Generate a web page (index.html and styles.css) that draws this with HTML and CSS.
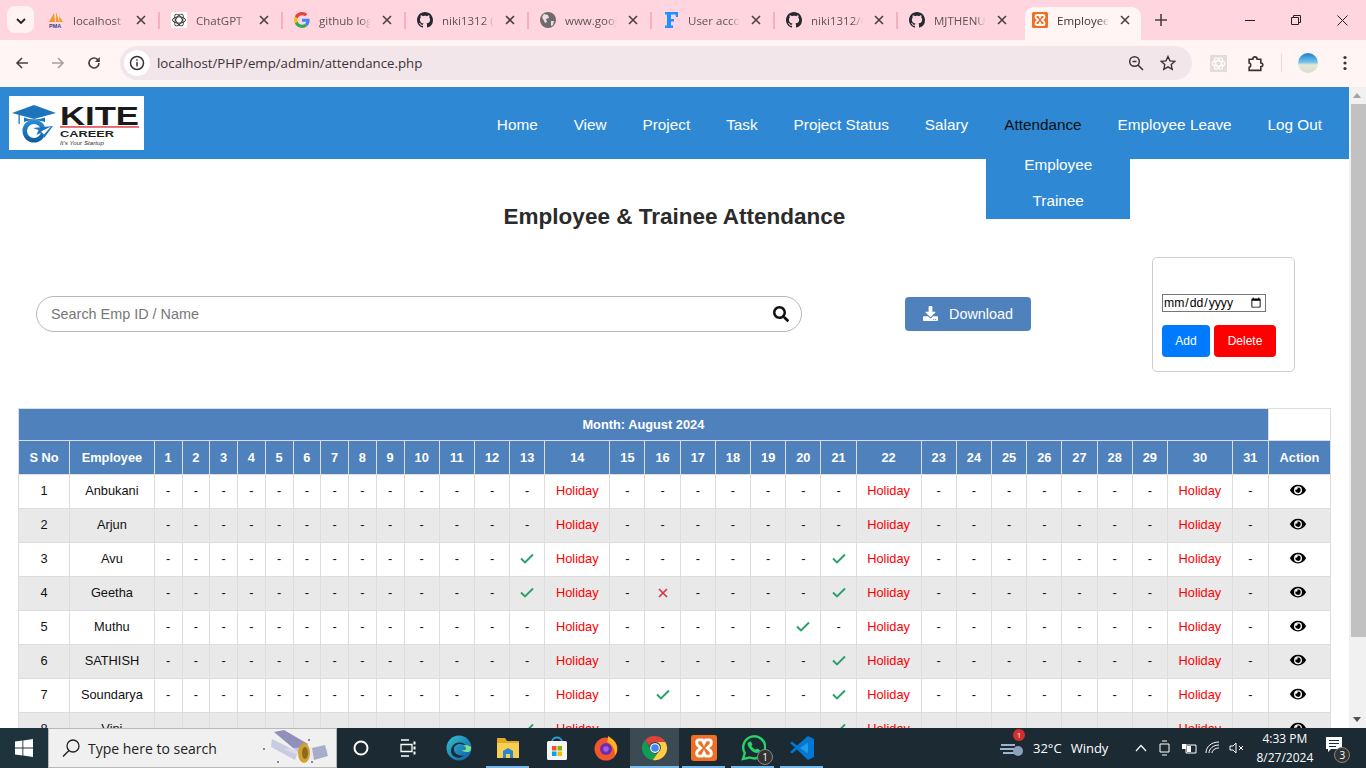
FILE: index.html
```html
<!DOCTYPE html>
<html lang="en">
<head>
    <meta charset="UTF-8">
    <meta name="viewport" content="width=device-width, initial-scale=1.0">
    <title>Employee Attendance</title>
    <link rel="stylesheet" href="styles.css">
</head>
<body>
    <svg class="sprites" aria-hidden="true">
        <symbol id="i-github" viewBox="0 0 16 16"><path fill="#24292f" d="M8 0C3.58 0 0 3.58 0 8c0 3.54 2.29 6.53 5.47 7.59.4.07.55-.17.55-.38 0-.19-.01-.82-.01-1.49-2.01.37-2.53-.49-2.69-.94-.09-.23-.48-.94-.82-1.13-.28-.15-.68-.52-.01-.53.63-.01 1.08.58 1.23.82.72 1.21 1.87.87 2.33.66.07-.52.28-.87.51-1.07-1.78-.2-3.64-.89-3.64-3.95 0-.87.31-1.59.82-2.15-.08-.2-.36-1.02.08-2.12 0 0 .67-.21 2.2.82.64-.18 1.32-.27 2-.27.68 0 1.36.09 2 .27 1.53-1.04 2.2-.82 2.2-.82.44 1.1.16 1.92.08 2.12.51.56.82 1.27.82 2.15 0 3.07-1.87 3.75-3.65 3.95.29.25.54.73.54 1.48 0 1.07-.01 1.93-.01 2.2 0 .21.15.46.55.38A8.013 8.013 0 0016 8c0-4.42-3.58-8-8-8z"/></symbol>
        <symbol id="i-xampp" viewBox="0 0 16 16"><rect width="16" height="16" rx="1.5" fill="#ee6f25"/><path fill="none" stroke="#fff" stroke-width="1.8" d="M5 3h2l1 2 1-2h2c2 0 2 3 0 4l-1 1 1 1c2 1 2 4 0 4H9l-1-2-1 2H5c-2 0-2-3 0-4l1-1-1-1c-2-1-2-4 0-4z"/></symbol>
        <symbol id="i-close" viewBox="0 0 10 10"><path fill="none" stroke="#4b3f44" stroke-width="1.6" d="M1 1l8 8M9 1l-8 8"/></symbol>
        <symbol id="i-check" viewBox="0 0 14 11"><path fill="none" stroke="#28a06a" stroke-width="1.9" d="M1 5.500l4 4L13 1.500"/></symbol>
        <symbol id="i-cross" viewBox="0 0 10 10"><path fill="none" stroke="#dc3545" stroke-width="1.7" d="M1 1l8 8M9 1l-8 8"/></symbol>
        <symbol id="i-eye" viewBox="0 0 576 512"><path fill="#000" d="M572.52 241.4C518.29 135.59 410.93 64 288 64S57.68 135.64 3.48 241.41a32.35 32.35 0 0 0 0 29.19C57.71 376.41 165.07 448 288 448s230.32-71.64 284.52-177.41a32.35 32.35 0 0 0 0-29.19zM288 400a144 144 0 1 1 144-144 143.93 143.93 0 0 1-144 144zm0-240a95.31 95.31 0 0 0-25.31 3.79 47.85 47.85 0 0 1-66.9 66.9A95.78 95.78 0 1 0 288 160z"/></symbol>
    </svg>

    <div class="screen">
        <div class="tabstrip">
            <button class="tab-menu"><svg width="10" height="6" viewBox="0 0 10 6"><path fill="none" stroke="#222" stroke-width="1.8" d="M1 1l4 4 4-4"/></svg></button>
            <div class="tab">
                <svg class="favicon" viewBox="0 0 16 16"><path fill="#f29a1f" d="M1 10L6 1l1 9zM8 10V0l3 10zM11.500 10L11 4l4 6z"/><text class="pma" x="1" y="15.500">PMA</text></svg>
                <span class="tab-title">localhost /</span>
                <svg class="tab-close"><use href="#i-close"/></svg>
            </div>
            <div class="tab">
                <svg class="favicon" viewBox="0 0 16 16"><rect width="16" height="16" fill="#fff"/><g fill="none" stroke="#333" stroke-width="1"><ellipse cx="8" cy="8" rx="6.500" ry="3.200"/><ellipse cx="8" cy="8" rx="6.500" ry="3.200" transform="rotate(60 8 8)"/><ellipse cx="8" cy="8" rx="6.500" ry="3.200" transform="rotate(120 8 8)"/></g></svg>
                <span class="tab-title">ChatGPT</span>
                <svg class="tab-close"><use href="#i-close"/></svg>
            </div>
            <div class="tab">
                <svg class="favicon" viewBox="0 0 48 48"><path fill="#EA4335" d="M24 9.500c3.540 0 6.710 1.220 9.210 3.600l6.850-6.850C35.900 2.380 30.470 0 24 0 14.620 0 6.510 5.380 2.560 13.220l7.980 6.190C12.430 13.720 17.740 9.500 24 9.500z"/><path fill="#4285F4" d="M46.980 24.550c0-1.570-.15-3.090-.38-4.550H24v9.020h12.940c-.58 2.960-2.260 5.480-4.780 7.180l7.730 6c4.510-4.180 7.090-10.360 7.090-17.650z"/><path fill="#FBBC05" d="M10.530 28.590c-.48-1.450-.76-2.990-.76-4.590s.27-3.140.76-4.590l-7.980-6.190C.92 16.460 0 20.120 0 24c0 3.880.92 7.540 2.560 10.780l7.970-6.190z"/><path fill="#34A853" d="M24 48c6.480 0 11.930-2.130 15.890-5.810l-7.730-6c-2.150 1.450-4.920 2.300-8.160 2.300-6.260 0-11.570-4.220-13.470-9.910l-7.980 6.190C6.510 42.620 14.620 48 24 48z"/></svg>
                <span class="tab-title">github login</span>
                <svg class="tab-close"><use href="#i-close"/></svg>
            </div>
            <div class="tab">
                <svg class="favicon"><use href="#i-github"/></svg>
                <span class="tab-title">niki1312 (</span>
                <svg class="tab-close"><use href="#i-close"/></svg>
            </div>
            <div class="tab">
                <svg class="favicon" viewBox="0 0 16 16"><circle cx="8" cy="8" r="8" fill="#6f6a6c"/><path fill="#e9dfe2" d="M4 2l4 1 1 3-3 1 1 3-2 1-2-4-1-2zM11 9l3 0-1 4-2 1z"/></svg>
                <span class="tab-title">www.google</span>
                <svg class="tab-close"><use href="#i-close"/></svg>
            </div>
            <div class="tab">
                <svg class="favicon" viewBox="0 0 16 16"><path fill="#1e90ff" d="M2 0h13v5h-2l-.5-2.500H8V7h3v2.500H8V13.500h2V16H2v-2.500h2v-11H2z"/></svg>
                <span class="tab-title">User account</span>
                <svg class="tab-close"><use href="#i-close"/></svg>
            </div>
            <div class="tab">
                <svg class="favicon"><use href="#i-github"/></svg>
                <span class="tab-title">niki1312/C</span>
                <svg class="tab-close"><use href="#i-close"/></svg>
            </div>
            <div class="tab tab-nosep">
                <svg class="favicon"><use href="#i-github"/></svg>
                <span class="tab-title">MJTHENU</span>
                <svg class="tab-close"><use href="#i-close"/></svg>
            </div>
            <div class="tab tab-active tab-nosep">
                <svg class="favicon"><use href="#i-xampp"/></svg>
                <span class="tab-title">Employee</span>
                <svg class="tab-close"><use href="#i-close"/></svg>
            </div>
            <svg class="tab-new" width="12" height="12" viewBox="0 0 12 12"><path fill="none" stroke="#4b3f44" stroke-width="1.600" d="M6 0v12M0 6h12"/></svg>
            <div class="window-controls">
                <svg width="10" height="10" viewBox="0 0 10 10"><path stroke="#222" d="M0 5.500h10"/></svg>
                <svg width="10" height="10" viewBox="0 0 10 10"><path fill="none" stroke="#222" d="M.5 2.500h7v7h-7zM2.500 2.500v-2h7v7h-2"/></svg>
                <svg width="11" height="11" viewBox="0 0 11 11"><path fill="none" stroke="#222" d="M.5.500l10 10M10.500.500l-10 10"/></svg>
            </div>
        </div>

        <div class="toolbar">
            <svg class="nav-icon" viewBox="0 0 14 14"><path fill="none" stroke="#4b3f44" stroke-width="1.600" d="M13 7H2M7 2L2 7l5 5"/></svg>
            <svg class="nav-icon" viewBox="0 0 14 14"><path fill="none" stroke="#a89ea2" stroke-width="1.600" d="M1 7h11M7 2l5 5-5 5"/></svg>
            <svg class="nav-icon" viewBox="0 0 14 14"><path fill="none" stroke="#4b3f44" stroke-width="1.600" d="M12 7a5 5 0 11-1.500-3.600L12 5"/><path fill="#4b3f44" d="M12.800 1v5h-5z"/></svg>
            <div class="omnibox">
                <span class="site-info"><svg width="16" height="16" viewBox="0 0 16 16"><circle cx="8" cy="8" r="6.500" fill="none" stroke="#3c3236" stroke-width="1.500"/><path stroke="#3c3236" stroke-width="1.500" d="M8 7v4.500M8 4.200v1.500"/></svg></span>
                <span class="url">localhost/PHP/emp/admin/attendance.php</span>
                <svg class="omni-icon" viewBox="0 0 16 16"><circle cx="6.500" cy="6.500" r="4.800" fill="none" stroke="#3c3236" stroke-width="1.500"/><path stroke="#3c3236" stroke-width="1.600" d="M10 10l5 5M4.500 6.500h4"/></svg>
                <svg class="omni-icon" viewBox="0 0 16 16"><path fill="none" stroke="#3c3236" stroke-width="1.400" d="M8 1.500l2 4.400 4.700.5-3.500 3.200 1 4.700L8 11.900l-4.200 2.400 1-4.700L1.300 6.400 6 5.900z"/></svg>
            </div>
            <div class="toolbar-right">
                <svg class="ext-icon" viewBox="0 0 16 16"><rect width="16" height="16" fill="#e4dcdc"/><g fill="none" stroke="#fff" stroke-width="1"><ellipse cx="8" cy="8" rx="6" ry="2.500"/><ellipse cx="8" cy="8" rx="6" ry="2.500" transform="rotate(60 8 8)"/><ellipse cx="8" cy="8" rx="6" ry="2.500" transform="rotate(120 8 8)"/></g></svg>
                <svg class="ext-icon" viewBox="0 0 16 16"><path fill="none" stroke="#3c3236" stroke-width="1.500" d="M2 4h3.500c0-3 4-3 4 0H13v3.500c2.500 0 2.500 3.500 0 3.500v3.500H2v-3c2 0 2-4 0-4z"/></svg>
                <span class="toolbar-sep"></span>
                <span class="avatar"></span>
                <svg class="more-icon" width="4" height="16" viewBox="0 0 4 16"><circle cx="2" cy="2.500" r="1.600" fill="#3c3236"/><circle cx="2" cy="8" r="1.600" fill="#3c3236"/><circle cx="2" cy="13.500" r="1.600" fill="#3c3236"/></svg>
            </div>
        </div>

        <div class="viewport">
            <div class="page">
                <header class="site-header">
                    <svg class="logo" viewBox="0 0 135 54">
                        <defs>
                            <linearGradient id="logo-blue" x1="0" y1="0" x2="0" y2="1"><stop offset="0" stop-color="#2a8fd8"/><stop offset="1" stop-color="#0f5aa6"/></linearGradient>
                        </defs>
                        <rect width="135" height="54" fill="#fff"/>
                        <path fill="#1c75bc" d="M3 17L25 9l22 8-22 6z"/>
                        <path fill="#1c75bc" d="M15 21.500c6 2.500 14 2.500 21 0V26c-7-2.500-15-2.500-21 0z"/>
                        <path fill="#1c75bc" d="M9.500 18.500h1.300V28H9.500z"/>
                        <circle cx="25" cy="35" r="11.500" fill="url(#logo-blue)"/>
                        <circle cx="25" cy="35" r="7" fill="#fff"/>
                        <path fill="#1c75bc" d="M24 32l20-2-9 12-2.500-5.500-5 2.500 2-5z"/>
                        <path fill="#fff" d="M32 35.500l10-5-7 8z"/>
                        <text class="logo-kite" x="51" y="28.500" textLength="79" lengthAdjust="spacingAndGlyphs">KITE</text>
                        <rect x="51" y="30.300" width="79" height="1.300" fill="#e0202a"/>
                        <text class="logo-career" x="51" y="41" textLength="54" lengthAdjust="spacingAndGlyphs">CAREER</text>
                        <text class="logo-tag" x="51" y="49" textLength="44" lengthAdjust="spacingAndGlyphs">It's Your Startup</text>
                    </svg>
                    <nav class="main-nav">
                        <a href="#">Home</a>
                        <a href="#">View</a>
                        <a href="#">Project</a>
                        <a href="#">Task</a>
                        <a href="#">Project Status</a>
                        <a href="#">Salary</a>
                        <div class="nav-drop">
                            <a href="#" class="nav-current">Attendance</a>
                            <div class="drop-menu">
                                <a href="#">Employee</a>
                                <a href="#">Trainee</a>
                            </div>
                        </div>
                        <a href="#">Employee Leave</a>
                        <a href="#">Log Out</a>
                    </nav>
                </header>

                <h2 class="page-title">Employee &amp; Trainee Attendance</h2>

                <div class="tools">
                    <div class="search">
                        <input type="text" class="search-input" placeholder="Search Emp ID / Name">
                        <svg class="search-icon" viewBox="0 0 512 512"><path fill="#111" d="M505 442.700L405.300 343c-4.500-4.500-10.600-7-17-7H372c27.600-35.300 44-79.700 44-128C416 93.100 322.900 0 208 0S0 93.100 0 208s93.100 208 208 208c48.300 0 92.700-16.400 128-44v16.300c0 6.400 2.500 12.500 7 17l99.700 99.700c9.400 9.400 24.600 9.400 33.900 0l28.300-28.300c9.400-9.400 9.400-24.600.1-34zM208 336c-70.700 0-128-57.200-128-128 0-70.700 57.200-128 128-128 70.700 0 128 57.200 128 128 0 70.700-57.200 128-128 128z"/></svg>
                    </div>
                    <button class="download-btn">
                        <svg width="15" height="15" viewBox="0 0 512 512"><path fill="#fff" d="M216 0h80c13.300 0 24 10.700 24 24v168h87.700c17.800 0 26.700 21.500 14.100 34.100L269.700 378.300c-7.500 7.500-19.800 7.500-27.300 0L90.100 226.100c-12.600-12.600-3.700-34.100 14.100-34.100H192V24c0-13.300 10.700-24 24-24zm296 376v112c0 13.300-10.700 24-24 24H24c-13.300 0-24-10.700-24-24V376c0-13.300 10.700-24 24-24h146.700l49 49c20.100 20.100 52.500 20.100 72.600 0l49-49H488c13.300 0 24 10.700 24 24zm-124 88c0-11-9-20-20-20s-20 9-20 20 9 20 20 20 20-9 20-20zm64 0c0-11-9-20-20-20s-20 9-20 20 9 20 20 20 20-9 20-20z"/></svg>
                        Download
                    </button>
                    <div class="date-box">
                        <input type="date" class="date-input">
                        <div class="date-actions">
                            <button class="btn-add">Add</button>
                            <button class="btn-delete">Delete</button>
                        </div>
                    </div>
                </div>

                <table class="attendance">
                    <colgroup>
                        <col class="col-sno"><col class="col-name">
                        <col class="col-s"><col class="col-s"><col class="col-s"><col class="col-s"><col class="col-s"><col class="col-s"><col class="col-s"><col class="col-s"><col class="col-s">
                        <col class="col-d"><col class="col-d"><col class="col-d"><col class="col-d"><col class="col-h">
                        <col class="col-d"><col class="col-d"><col class="col-d"><col class="col-d"><col class="col-d"><col class="col-d"><col class="col-d"><col class="col-h">
                        <col class="col-d"><col class="col-d"><col class="col-d"><col class="col-d"><col class="col-d"><col class="col-d"><col class="col-d"><col class="col-h">
                        <col class="col-last"><col class="col-action">
                    </colgroup>
                    <thead>
                        <tr class="month-row">
                            <th colspan="33">Month: August 2024</th>
                            <th class="blank"></th>
                        </tr>
                        <tr>
                            <th>S No</th><th>Employee</th><th>1</th><th>2</th><th>3</th><th>4</th><th>5</th><th>6</th><th>7</th><th>8</th><th>9</th><th>10</th><th>11</th><th>12</th><th>13</th><th>14</th><th>15</th><th>16</th><th>17</th><th>18</th><th>19</th><th>20</th><th>21</th><th>22</th><th>23</th><th>24</th><th>25</th><th>26</th><th>27</th><th>28</th><th>29</th><th>30</th><th>31</th><th>Action</th>
                        </tr>
                    </thead>
                    <tbody>
                        <tr><td>1</td><td>Anbukani</td><td>-</td><td>-</td><td>-</td><td>-</td><td>-</td><td>-</td><td>-</td><td>-</td><td>-</td><td>-</td><td>-</td><td>-</td><td>-</td><td class="holiday">Holiday</td><td>-</td><td>-</td><td>-</td><td>-</td><td>-</td><td>-</td><td>-</td><td class="holiday">Holiday</td><td>-</td><td>-</td><td>-</td><td>-</td><td>-</td><td>-</td><td>-</td><td class="holiday">Holiday</td><td>-</td><td><svg class="eye"><use href="#i-eye"/></svg></td></tr>
                        <tr><td>2</td><td>Arjun</td><td>-</td><td>-</td><td>-</td><td>-</td><td>-</td><td>-</td><td>-</td><td>-</td><td>-</td><td>-</td><td>-</td><td>-</td><td>-</td><td class="holiday">Holiday</td><td>-</td><td>-</td><td>-</td><td>-</td><td>-</td><td>-</td><td>-</td><td class="holiday">Holiday</td><td>-</td><td>-</td><td>-</td><td>-</td><td>-</td><td>-</td><td>-</td><td class="holiday">Holiday</td><td>-</td><td><svg class="eye"><use href="#i-eye"/></svg></td></tr>
                        <tr><td>3</td><td>Avu</td><td>-</td><td>-</td><td>-</td><td>-</td><td>-</td><td>-</td><td>-</td><td>-</td><td>-</td><td>-</td><td>-</td><td>-</td><td><svg class="mark"><use href="#i-check"/></svg></td><td class="holiday">Holiday</td><td>-</td><td>-</td><td>-</td><td>-</td><td>-</td><td>-</td><td><svg class="mark"><use href="#i-check"/></svg></td><td class="holiday">Holiday</td><td>-</td><td>-</td><td>-</td><td>-</td><td>-</td><td>-</td><td>-</td><td class="holiday">Holiday</td><td>-</td><td><svg class="eye"><use href="#i-eye"/></svg></td></tr>
                        <tr><td>4</td><td>Geetha</td><td>-</td><td>-</td><td>-</td><td>-</td><td>-</td><td>-</td><td>-</td><td>-</td><td>-</td><td>-</td><td>-</td><td>-</td><td><svg class="mark"><use href="#i-check"/></svg></td><td class="holiday">Holiday</td><td>-</td><td><svg class="mark mark-x"><use href="#i-cross"/></svg></td><td>-</td><td>-</td><td>-</td><td>-</td><td><svg class="mark"><use href="#i-check"/></svg></td><td class="holiday">Holiday</td><td>-</td><td>-</td><td>-</td><td>-</td><td>-</td><td>-</td><td>-</td><td class="holiday">Holiday</td><td>-</td><td><svg class="eye"><use href="#i-eye"/></svg></td></tr>
                        <tr><td>5</td><td>Muthu</td><td>-</td><td>-</td><td>-</td><td>-</td><td>-</td><td>-</td><td>-</td><td>-</td><td>-</td><td>-</td><td>-</td><td>-</td><td>-</td><td class="holiday">Holiday</td><td>-</td><td>-</td><td>-</td><td>-</td><td>-</td><td><svg class="mark"><use href="#i-check"/></svg></td><td>-</td><td class="holiday">Holiday</td><td>-</td><td>-</td><td>-</td><td>-</td><td>-</td><td>-</td><td>-</td><td class="holiday">Holiday</td><td>-</td><td><svg class="eye"><use href="#i-eye"/></svg></td></tr>
                        <tr><td>6</td><td>SATHISH</td><td>-</td><td>-</td><td>-</td><td>-</td><td>-</td><td>-</td><td>-</td><td>-</td><td>-</td><td>-</td><td>-</td><td>-</td><td>-</td><td class="holiday">Holiday</td><td>-</td><td>-</td><td>-</td><td>-</td><td>-</td><td>-</td><td><svg class="mark"><use href="#i-check"/></svg></td><td class="holiday">Holiday</td><td>-</td><td>-</td><td>-</td><td>-</td><td>-</td><td>-</td><td>-</td><td class="holiday">Holiday</td><td>-</td><td><svg class="eye"><use href="#i-eye"/></svg></td></tr>
                        <tr><td>7</td><td>Soundarya</td><td>-</td><td>-</td><td>-</td><td>-</td><td>-</td><td>-</td><td>-</td><td>-</td><td>-</td><td>-</td><td>-</td><td>-</td><td>-</td><td class="holiday">Holiday</td><td>-</td><td><svg class="mark"><use href="#i-check"/></svg></td><td>-</td><td>-</td><td>-</td><td>-</td><td><svg class="mark"><use href="#i-check"/></svg></td><td class="holiday">Holiday</td><td>-</td><td>-</td><td>-</td><td>-</td><td>-</td><td>-</td><td>-</td><td class="holiday">Holiday</td><td>-</td><td><svg class="eye"><use href="#i-eye"/></svg></td></tr>
                        <tr><td>8</td><td>Vini</td><td>-</td><td>-</td><td>-</td><td>-</td><td>-</td><td>-</td><td>-</td><td>-</td><td>-</td><td>-</td><td>-</td><td>-</td><td><svg class="mark"><use href="#i-check"/></svg></td><td class="holiday">Holiday</td><td>-</td><td>-</td><td>-</td><td>-</td><td>-</td><td>-</td><td><svg class="mark"><use href="#i-check"/></svg></td><td class="holiday">Holiday</td><td>-</td><td>-</td><td>-</td><td>-</td><td>-</td><td>-</td><td>-</td><td class="holiday">Holiday</td><td>-</td><td><svg class="eye"><use href="#i-eye"/></svg></td></tr>
                    </tbody>
                </table>
            </div>
            <div class="scrollbar">
                <span class="arrow-up"></span>
                <span class="thumb"></span>
                <span class="arrow-down"></span>
            </div>
        </div>

        <div class="taskbar">
            <div class="start"><svg width="18" height="18" viewBox="0 0 18 18"><path fill="#fff" d="M0 2.500l7.400-1v7H0zM8.300 1.400L18 0v8.500H8.300zM0 9.400h7.400v7.100l-7.400-1zM8.300 9.400H18V18l-9.700-1.400z"/></svg></div>
            <div class="task-search">
                <svg width="20" height="20" viewBox="0 0 20 20"><circle cx="12" cy="8" r="6" fill="none" stroke="#222" stroke-width="1.300"/><path stroke="#222" stroke-width="1.500" d="M8 12.500L2 18.500"/></svg>
                <span class="task-search-text">Type here to search</span>
                <svg class="doodle" width="68" height="38" viewBox="0 0 68 38">
                    <circle cx="1" cy="20" r="1" fill="#5a6a80"/><circle cx="46" cy="11" r="1" fill="#5a6a80"/><circle cx="15" cy="33" r="1" fill="#5a6a80"/><circle cx="49" cy="33" r="1" fill="#5a6a80"/>
                    <path fill="#8f90bb" d="M11 3l10-2 24 14-9 9z"/>
                    <path fill="#c9cbe0" d="M9 10l26 13-3 8L8 18z"/>
                    <path fill="#e4e6f2" d="M20 20l22-2 24 2-4 8-14 3z" opacity=".6"/>
                    <path fill="#a9acc8" d="M49 19l13-3 3 11-14 4z"/>
                    <ellipse cx="41" cy="24" rx="6" ry="10" fill="#d1a02f"/>
                    <ellipse cx="42" cy="24" rx="3" ry="6" fill="#8a6a1f"/>
                </svg>
            </div>
            <div class="task-item"><svg width="20" height="20" viewBox="0 0 20 20"><circle cx="10" cy="10" r="6.500" fill="none" stroke="#fff" stroke-width="2"/></svg></div>
            <div class="task-item"><svg width="18" height="18" viewBox="0 0 18 18"><path fill="none" stroke="#fff" stroke-width="1.300" d="M2 1h8M2 17h8M2 5.500h11v7H2z"/><path stroke="#fff" stroke-width="2" d="M15.500 2.500v3M15.500 7.500v3M15.500 12.500v3"/></svg></div>
            <div class="task-apps">
                <div class="task-item"><svg width="26" height="26" viewBox="0 0 26 26"><defs><linearGradient id="edge" x1="0" y1="0" x2="1" y2="1"><stop offset="0" stop-color="#35c1d1"/><stop offset="1" stop-color="#0c59a4"/></linearGradient></defs><circle cx="13" cy="13" r="12.500" fill="url(#edge)"/><path fill="#1c2a33" d="M14 9c-4 0-6.500 2.500-6 6 .5 4 5 6.500 10 5.500-3 3-9 3-12-1C3.500 15.500 6 8 12.500 7.500c4-.3 7 1.500 8 4-1.500-1.500-4-2.500-6.500-2.500z"/><path fill="#7fe08f" d="M25 12c.3 3-1 5-3 5s-5 0-6.500-2c1.500.5 4 .5 4.500-1 .4-1.500-1-3-3-3.500 3-.5 7 0 8 1.500z"/></svg></div>
                <div class="task-item task-running"><svg width="26" height="24" viewBox="0 0 26 24"><path fill="#e3a72a" d="M2 2h8l2 3h12v17H2z"/><path fill="#f7cf52" d="M2 7h22v15H2z"/><path fill="#2a86d1" d="M8 22v-7l5-3 5 3v7h-3v-4h-4v4z"/></svg></div>
                <div class="task-item"><svg width="26" height="26" viewBox="0 0 26 26"><path fill="none" stroke="#2a9fd6" stroke-width="1.800" d="M8 7c0-6 10-6 10 0"/><rect x="3" y="6" width="20" height="19" rx="1.500" fill="#f5f5f5"/><rect x="8" y="11" width="4.500" height="4.500" fill="#f25022"/><rect x="13.500" y="11" width="4.500" height="4.500" fill="#7fba00"/><rect x="8" y="16.500" width="4.500" height="4.500" fill="#00a4ef"/><rect x="13.500" y="16.500" width="4.500" height="4.500" fill="#ffb900"/></svg></div>
                <div class="task-item"><svg width="26" height="26" viewBox="0 0 26 26"><circle cx="13" cy="14" r="11.500" fill="#f2562c"/><path fill="#ffb31a" d="M15 1c5 3 9 7 9 13 0 3-1 5-2 6 0-6-3-11-8-13 1-2 1-4 1-6z"/><circle cx="13" cy="14" r="6" fill="#6a2fb0"/><circle cx="13" cy="14" r="2.800" fill="#a65be0"/></svg></div>
                <div class="task-item task-active"><svg width="26" height="26" viewBox="0 0 48 48"><path fill="#db4437" d="M24 2a22 22 0 0119 11H24a11 11 0 00-10.500 7.500L6 9A22 22 0 0124 2z"/><path fill="#0f9d58" d="M6 9l10 18a11 11 0 0012 7.500L20 46A22 22 0 016 9z" /><path fill="#ffcd40" d="M43 13a22 22 0 01-23 33l9-13a11 11 0 004-16 10 10 0 00-9-4z"/><circle cx="24" cy="24" r="9" fill="#fff"/><circle cx="24" cy="24" r="7" fill="#4285f4"/></svg></div>
                <div class="task-item task-running"><svg width="26" height="26"><use href="#i-xampp"/></svg></div>
                <div class="task-item task-running task-badged"><svg width="26" height="28" viewBox="0 0 26 28"><path fill="none" stroke="#25d366" stroke-width="2.400" d="M3 25l1.800-6A11 11 0 1110 23.500z"/><path fill="#25d366" d="M9 8l2-.5 1.500 3-1 1.500c1 2 2.500 3 4 3.500l1.500-1 3 1.500c0 2-1.500 3-3 3-4 0-9-5-9.500-9 0-1 .5-2 1.500-2z"/></svg><span class="badge">1</span></div>
                <div class="task-item task-running"><svg width="26" height="26" viewBox="0 0 26 26"><path fill="#0078d4" d="M19 1l6 3v18l-6 3-11-10.500-5 4-2-1.500 5-4.500-5-4.500 2-1.500 5 4z"/><path fill="#1c9cea" d="M19 7.500v11L11 13z"/></svg></div>
            </div>
            <div class="tray">
                <span class="weather">
                    <svg width="26" height="24" viewBox="0 0 26 24"><path stroke="#9db4cf" stroke-width="2" d="M1 9h14M0 13h20M3 17h15"/><circle cx="18" cy="15" r="5" fill="#8aa0bc"/></svg>
                    <span class="weather-dot">1</span>
                </span>
                <span class="weather-temp">32°C</span>
                <span class="weather-text">Windy</span>
                <div class="tray-icons">
                    <svg width="12" height="8" viewBox="0 0 12 8"><path fill="none" stroke="#fff" stroke-width="1.200" d="M1 7l5-5.500L11 7"/></svg>
                    <svg width="12" height="18" viewBox="0 0 12 18"><path fill="none" stroke="#fff" d="M1 5h9v8H1zM3 2h5M3 16h5"/></svg>
                    <svg width="16" height="12" viewBox="0 0 16 12"><path fill="none" stroke="#fff" d="M5 3h10v8H5z"/><path fill="#fff" d="M1 2h4v5H1zM6 4h4v6H6z"/></svg>
                    <svg width="16" height="14" viewBox="0 0 16 14"><path fill="none" stroke="#fff" d="M1 12C1 6 6 1 14 1M4 12c0-4 4-8 10-8M7 12c0-2.500 3-5 7-5"/></svg>
                    <svg width="16" height="14" viewBox="0 0 16 14"><path fill="none" stroke="#fff" d="M1 5h3l3-3v10l-3-3H1zM10 5l4 4M14 5l-4 4"/></svg>
                </div>
                <div class="clock"><span>4:33 PM</span><span>8/27/2024</span></div>
                <span class="notify">
                    <svg width="18" height="15" viewBox="0 0 18 15"><path fill="#fff" d="M1 0h16v12H6l-3 3v-3H1z"/><path stroke="#1c2a33" d="M4 3.500h10M4 6.500h10M4 9.500h7"/></svg>
                    <span class="badge">3</span>
                </span>
            </div>
        </div>
    </div>
</body>
</html>
```

FILE: styles.css
```css
* {
    box-sizing: border-box;
}

html, body {
    margin: 0;
    height: 100%;
    overflow: hidden;
}

body {
    font-family: "Liberation Sans", Arial, sans-serif;
    background: #fff;
}

.sprites {
    display: none;
}

.screen {
    display: flex;
    flex-direction: column;
    height: 100vh;
}

/* browser tabs */
.tabstrip {
    display: flex;
    height: 40px;
    flex: none;
    background: #ffd6df;
    font-family: "Open Sans", sans-serif;
}

.tab-menu {
    width: 27px;
    height: 27px;
    margin: 6px 2px 0 7px;
    padding: 0;
    border: 0;
    border-radius: 8px;
    background: #fff2f2;
}

.tab {
    position: relative;
    display: flex;
    align-items: center;
    flex: none;
    width: 123px;
    height: 40px;
    padding-left: 12px;
}

.tab::after {
    content: "";
    position: absolute;
    right: -1px;
    top: 12px;
    width: 2px;
    height: 17px;
    background: #f9aebf;
}

.tab-nosep::after {
    display: none;
}

.tab-active::before {
    content: "";
    position: absolute;
    left: 5px;
    right: 2px;
    top: 7px;
    bottom: 0;
    border-radius: 9px 9px 0 0;
    background: #fff5f4;
}

.favicon {
    position: relative;
    flex: none;
    width: 16px;
    height: 16px;
}

.pma {
    font: bold 5.5px "Liberation Sans", sans-serif;
    fill: #28448a;
}

.tab-title {
    position: relative;
    width: 52px;
    margin-left: 9px;
    overflow: hidden;
    white-space: nowrap;
    font-size: 11.5px;
    color: #5c5357;
    -webkit-mask-image: linear-gradient(90deg, #000 80%, transparent);
    mask-image: linear-gradient(90deg, #000 80%, transparent);
}

.tab-active .tab-title {
    color: #3c3236;
}

.tab-close {
    position: relative;
    width: 10px;
    height: 10px;
    margin-left: 11px;
}

.tab-new {
    align-self: center;
    margin-left: 12px;
}

.window-controls {
    display: flex;
    align-items: center;
    margin-left: auto;
    gap: 36px;
    padding-right: 18px;
}

/* address bar */
.toolbar {
    display: flex;
    align-items: center;
    flex: none;
    height: 47px;
    padding: 0 0 1px 15px;
    gap: 22px;
    background: #fff5f4;
}

.nav-icon {
    width: 14px;
    height: 14px;
}

.omnibox {
    display: flex;
    align-items: center;
    width: 1072px;
    height: 34px;
    margin-left: -3px;
    padding-left: 4px;
    border-radius: 17px;
    background: #f2e6ea;
}

.site-info {
    display: flex;
    align-items: center;
    justify-content: center;
    width: 26px;
    height: 26px;
    border-radius: 50%;
    background: #fff;
}

.url {
    flex: 1;
    margin-left: 7px;
    font-family: "Open Sans", sans-serif;
    font-size: 13.25px;
    color: #3c3236;
}

.omni-icon {
    width: 16px;
    height: 16px;
    margin-right: 16px;
}

.toolbar-right {
    display: flex;
    align-items: center;
    margin-left: -4px;
}

.ext-icon {
    width: 17px;
    height: 17px;
    margin-right: 20px;
}

.ext-icon + .ext-icon {
    margin-right: 17px;
}

.toolbar-sep {
    width: 1px;
    height: 18px;
    margin-right: 16px;
    background: #fbd0da;
}

.avatar {
    width: 20px;
    height: 20px;
    margin-right: 25px;
    border-radius: 50%;
    background: linear-gradient(#1e7fd0, #6fc3e8 45%, #e8e8d8 60%, #dcdccb);
}

/* page */
.viewport {
    display: flex;
    flex: 1;
    min-height: 0;
}

.page {
    flex: 1;
    min-width: 0;
    overflow: hidden;
}

.site-header {
    display: flex;
    align-items: center;
    justify-content: space-between;
    height: 72px;
    padding: 0 9px;
    background: #2e88d4;
}

.logo {
    display: block;
    width: 135px;
    height: 54px;
}

.logo text {
    font-family: "Liberation Sans", sans-serif;
}

.logo-kite {
    font-size: 26px;
    font-weight: bold;
    fill: #1a1a1a;
}

.logo-career {
    font-size: 8.5px;
    font-weight: bold;
    fill: #222;
}

.logo-tag {
    font-size: 6px;
    font-style: italic;
    fill: #333;
}

.main-nav {
    display: flex;
    align-items: center;
    gap: 36px;
    padding: 4px 18px 0 0;
}

.main-nav a {
    color: #fff;
    font-size: 15.3px;
    text-decoration: none;
}

.nav-drop {
    position: relative;
}

.main-nav .nav-current {
    color: #111;
}

.drop-menu {
    position: absolute;
    top: 31px;
    left: -18px;
    display: flex;
    flex-direction: column;
    width: 144px;
    background: #2e88d4;
}

.drop-menu a {
    height: 36px;
    line-height: 36px;
    text-align: center;
}

.page-title {
    margin: 45px 0 27px;
    font-size: 22.5px;
    line-height: 26px;
    text-align: center;
    color: #2b2b2b;
}

.tools {
    display: flex;
    align-items: center;
    padding-left: 36px;
}

.search {
    position: relative;
    width: 766px;
    margin-bottom: 2px;
}

.search-input {
    display: block;
    width: 100%;
    height: 36px;
    padding: 0 40px 0 14px;
    border: 1px solid #b5b5b5;
    border-radius: 18px;
    font-family: "Liberation Sans", sans-serif;
    font-size: 14.4px;
    outline: none;
}

.search-input::placeholder {
    color: #777;
}

.search-icon {
    position: absolute;
    right: 13px;
    top: 10px;
    width: 16px;
    height: 16px;
}

.download-btn {
    display: flex;
    align-items: center;
    gap: 11px;
    width: 126px;
    height: 34px;
    margin: 0 0 2px 103px;
    padding: 0 0 0 18px;
    border: 0;
    border-radius: 4px;
    background: #4f81bd;
    color: #fff;
    font-family: "Liberation Sans", sans-serif;
    font-size: 14.4px;
}

.date-box {
    width: 143px;
    height: 115px;
    margin-left: 121px;
    padding: 36px 9px 0;
    border: 1px solid #ccc;
    border-radius: 5px;
}

.date-input {
    display: block;
    width: 104px;
    height: 18px;
    padding: 0 1px;
    border: 1px solid #767676;
    font-family: "Liberation Sans", sans-serif;
    font-size: 12.2px;
}

.date-input::-webkit-datetime-edit {
    padding: 0;
    margin-left: -1px;
}

.date-actions {
    display: flex;
    gap: 4px;
    margin-top: 13px;
}

.date-actions button {
    height: 32px;
    padding: 0;
    border: 0;
    border-radius: 4px;
    color: #fff;
    font-family: "Liberation Sans", sans-serif;
    font-size: 12px;
}

.btn-add {
    width: 48px;
    background: #007bff;
}

.btn-delete {
    width: 62px;
    background: #ff0000;
}

/* attendance table */
.attendance {
    width: 1312.4px;
    margin: 36px 0 0 18px;
    border-collapse: collapse;
    table-layout: fixed;
    font-size: 12.8px;
}

.col-sno { width: 51px; }
.col-name { width: 84.8px; }
.col-s { width: 27.75px; }
.col-d { width: 35.2px; }
.col-h { width: 65px; }
.col-last { width: 35.7px; }
.col-action { width: 62.55px; }

.attendance th, .attendance td {
    padding: 0;
    border: 1px solid #ddd;
    text-align: center;
    white-space: nowrap;
}

.attendance th {
    height: 34px;
    padding-bottom: 1px;
    background: #4f81bd;
    color: #fff;
}

.month-row th {
    height: 32px;
    padding-bottom: 0;
}

.attendance th.blank {
    background: #fff;
}

.attendance td {
    height: 34px;
    padding-bottom: 2px;
    color: #111;
}

.attendance tbody tr:nth-child(even) td {
    background: #e9e9e9;
}

.attendance td.holiday {
    color: #f00;
}

.mark {
    display: block;
    width: 14px;
    height: 11px;
    margin: 0 auto;
}

.mark-x {
    width: 10px;
    height: 10px;
}

.eye {
    display: block;
    width: 16px;
    height: 14.4px;
    margin-left: 21px;
}

/* fake scrollbar */
.scrollbar {
    position: relative;
    flex: none;
    width: 17px;
    background: #f1f1f1;
}

.thumb {
    position: absolute;
    left: 2px;
    right: 0;
    top: 17px;
    height: 533px;
    background: #c1c1c1;
}

.arrow-up, .arrow-down {
    position: absolute;
    left: 4px;
    width: 0;
    height: 0;
    border-left: 4.500px solid transparent;
    border-right: 4.500px solid transparent;
}

.arrow-up {
    top: 6px;
    border-bottom: 5px solid #a3a3a3;
}

.arrow-down {
    bottom: 6px;
    border-top: 5px solid #505050;
}

/* windows taskbar */
.taskbar {
    display: flex;
    align-items: center;
    flex: none;
    height: 40px;
    background: #1c2a33;
    font-family: "Open Sans", sans-serif;
    color: #fff;
}

.start {
    display: flex;
    align-items: center;
    justify-content: center;
    width: 48px;
    height: 40px;
    background: #1f333d;
}

.task-search {
    display: flex;
    align-items: center;
    width: 289px;
    height: 40px;
    padding: 0 5px 0 12px;
    background: #f0f0f0;
    border: 1px solid #b8b8b8;
    color: #222;
}

.task-search-text {
    margin-left: 7px;
    font-size: 14px;
}

.doodle {
    margin-left: auto;
}

.task-item {
    position: relative;
    display: flex;
    align-items: center;
    justify-content: center;
    flex: none;
    width: 47px;
    height: 40px;
}

.task-apps {
    display: flex;
    margin-left: 3px;
}

.task-apps .task-item {
    width: 49px;
}

.task-running::after, .task-active::after {
    content: "";
    position: absolute;
    left: 3px;
    right: 3px;
    bottom: 0;
    height: 2px;
    background: #76b9ed;
}

.task-active {
    background: #3c4a53;
}

.task-active::after {
    left: 0;
    right: 0;
}

.badge {
    position: absolute;
    right: 4px;
    bottom: 3px;
    width: 16px;
    height: 16px;
    border: 1px solid #888;
    border-radius: 50%;
    background: #333;
    color: #fff;
    font-size: 10px;
    line-height: 14px;
    text-align: center;
}

.tray {
    display: flex;
    align-items: center;
    flex: 1;
    height: 40px;
    padding-left: 174px;
}

.weather {
    position: relative;
    display: flex;
}

.weather-dot {
    position: absolute;
    top: -7px;
    right: 1px;
    width: 12px;
    height: 12px;
    border-radius: 50%;
    background: #d32f2f;
    font-size: 8px;
    line-height: 12px;
    text-align: center;
}

.weather-temp, .weather-text {
    font-size: 13px;
}

.weather-temp {
    margin-left: 7px;
}

.weather-text {
    margin-left: 9px;
}

.tray-icons {
    display: grid;
    grid-template-columns: repeat(5, 24px);
    justify-items: center;
    align-items: center;
    margin-left: 21px;
}

.clock {
    display: flex;
    flex-direction: column;
    align-items: center;
    width: 57px;
    margin-left: 7px;
    font-size: 12px;
    line-height: 19px;
}

.notify {
    position: relative;
    display: flex;
    margin: -7px 0 0 12px;
}

.notify .badge {
    right: -7px;
    bottom: -11px;
}
```
